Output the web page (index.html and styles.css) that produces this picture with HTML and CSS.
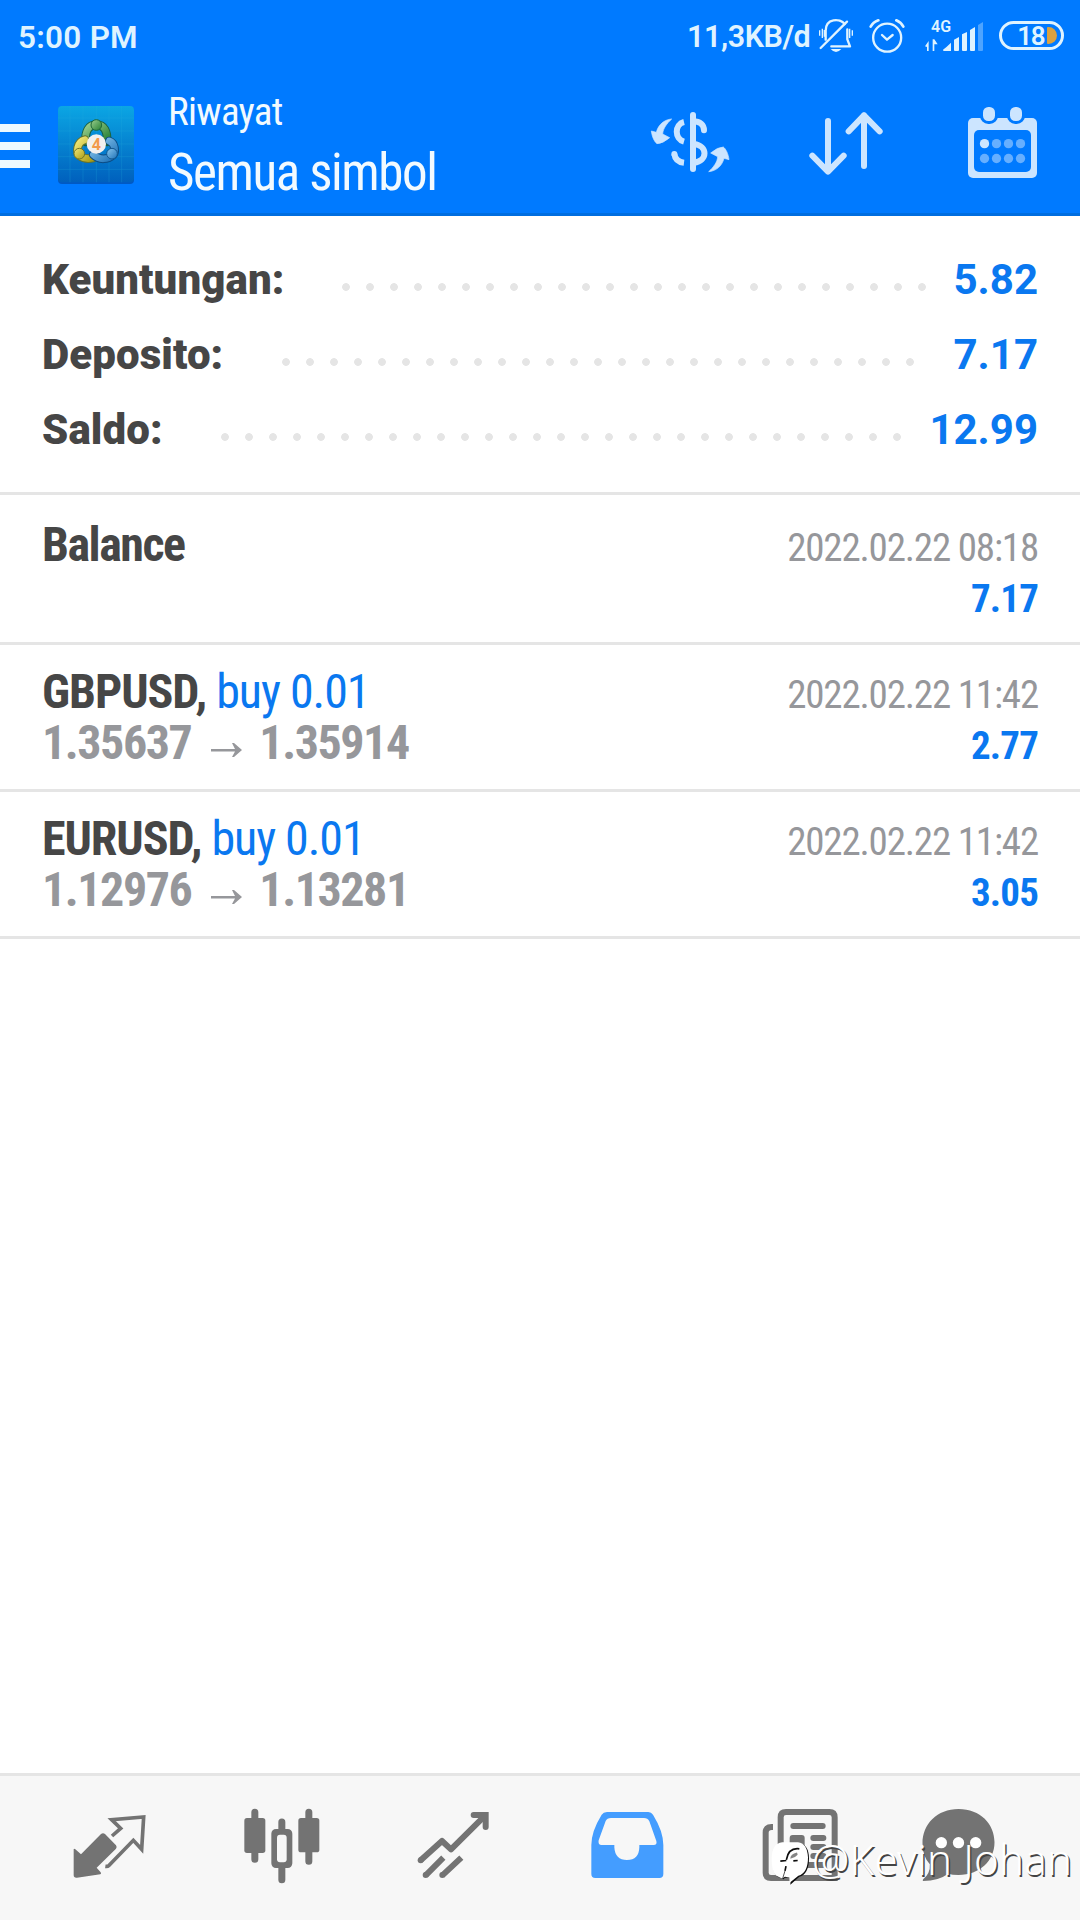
FILE: index.html
```html
<!DOCTYPE html>
<html lang="id">
<head>
<meta charset="utf-8">
<title>Riwayat</title>
<link rel="stylesheet" href="styles.css">
</head>
<body>
<div class="screen">
  <div class="status">
    <span class="clock">5:00 PM</span>
    <span class="speed">11,3KB/d</span>
    <svg class="bell" viewBox="594 54 108 108">
      <g fill="none" stroke="#dff3ff" stroke-width="7" stroke-linecap="round" stroke-linejoin="round">
        <path d="M602 144L681 65"/><path d="M617 119V92C617 54 660 54 674 72"/><path d="M682 88V118L690 139H634"/>
      </g>
      <g stroke="#dff3ff" stroke-width="4"><path d="M599 91V107M607 86V114M613 90V110M689 86V114M697 91V107"/></g>
      <path d="M632 147H664Q648 165 632 147Z" fill="#dff3ff"/>
    </svg>
    <svg class="alarm" viewBox="746 54 108 108">
      <g fill="none" stroke="#dff3ff" stroke-width="7" stroke-linecap="round" stroke-linejoin="round">
        <circle cx="800.500" cy="113" r="42"/><path d="M785 105L800 119L817 105"/><path d="M751 80Q758 67 774 61M849 80Q842 67 828 61" stroke-width="8"/>
      </g>
    </svg>
    <div class="signal">
      <span class="net">4G</span>
      <svg class="bars" viewBox="915 60 177 96" fill="#dff3ff">
        <path d="M915 136L926 120V150H921V138Z M938 150V115H943L953 130H943V150Z"/>
        <path d="M969 146Q981 137 993 125V150H972Q969 150 969 146Z"/>
        <path d="M1002 116L1017 108V147Q1017 150 1014 150H1005Q1002 150 1002 147Z"/>
        <path d="M1026 100L1041 93V147Q1041 150 1038 150H1029Q1026 150 1026 147Z"/>
        <path d="M1050 87L1065 78V147Q1065 150 1062 150H1053Q1050 150 1050 147Z"/>
        <path d="M1074 72L1089 63V147Q1089 150 1086 150H1077Q1074 150 1074 147Z" opacity=".35"/>
      </svg>
    </div>
    <div class="battery"><span>18</span><i></i></div>
  </div>

  <header class="appbar">
    <div class="menu"><i></i><i></i><i></i></div>
    <svg class="logo" viewBox="172 315 234 240">
      <defs>
        <linearGradient id="tile" x1="0" y1="0" x2="0" y2="1"><stop offset="0" stop-color="#0ba6e4"/><stop offset="1" stop-color="#0060bd"/></linearGradient>
        <linearGradient id="green" x1="0" y1="0" x2="1" y2="1"><stop offset="0" stop-color="#9ccf8f"/><stop offset="1" stop-color="#257f32"/></linearGradient>
        <linearGradient id="gold" x1="0" y1="0" x2="1" y2="1"><stop offset="0" stop-color="#f0e777"/><stop offset="1" stop-color="#ac9d16"/></linearGradient>
        <linearGradient id="sky" x1="0" y1="0" x2="1" y2="1"><stop offset="0" stop-color="#8cc8ee"/><stop offset="1" stop-color="#1e72b8"/></linearGradient>
      </defs>
      <rect x="175" y="321" width="228" height="231" rx="12" fill="#0059c4"/>
      <rect x="175" y="318" width="228" height="229" rx="12" fill="url(#tile)"/>
      <path d="M211 318V547M250 318V547M290 318V547M328 318V547M366 318V547M175 354H403M175 393H403M175 432H403M175 470H403M175 508H403" stroke="#27b2df" stroke-width="2" opacity=".33"/>
      <g fill="none" stroke-linecap="round">
        <path d="M258 426C256 395 266 374 290 374S324 395 322 426" stroke="#1b6040" stroke-width="26"/>
        <path d="M258 423C256 395 266 374 290 374S324 395 322 423" stroke="url(#green)" stroke-width="20"/>
        <path d="M256 419C231 425 228 460 240 468S264 478 280 474" stroke="#67742d" stroke-width="26"/>
        <path d="M256 419C231 425 228 460 240 468S264 478 280 474" stroke="url(#gold)" stroke-width="20"/>
        <path d="M329 423C346 429 350 456 338 467S299 482 281 464" stroke="#0b4b84" stroke-width="26"/>
        <path d="M329 423C346 429 350 456 338 467S299 482 281 464" stroke="url(#sky)" stroke-width="20"/>
      </g>
      <circle cx="290" cy="375" r="16" fill="url(#green)" stroke="#1e693b" stroke-width="3"/>
      <circle cx="239" cy="461" r="16" fill="url(#gold)" stroke="#6e7428" stroke-width="3"/>
      <circle cx="337" cy="461" r="16" fill="url(#sky)" stroke="#12578f" stroke-width="3"/>
      <circle cx="290" cy="432" r="29" fill="#f2f0ef"/>
      <text x="290" y="449" text-anchor="middle" class="four">4</text>
    </svg>
    <div class="titles">
      <span class="subtitle">Riwayat</span>
      <span class="title">Semua simbol</span>
    </div>
    <svg class="swap" viewBox="90 315 240 231">
      <g fill="none" stroke="#cce5ff" stroke-width="18">
        <path d="M219 345V507" stroke-linecap="round"/>
        <path d="M192 366C163 373 163 417 192 425"/>
        <path d="M219 364C241 364 252 374 252 391" stroke-linecap="round"/>
        <path d="M163 462C165 477 175 486 192 488"/><path d="M163 462V462.100" stroke-linecap="round"/>
        <path d="M222 432C264 437 264 483 222 488"/>
      </g>
      <g fill="#cce5ff" stroke="#cce5ff" stroke-width="2" stroke-linejoin="round">
        <path d="M155 357C132 359 115 374 109 397L94 393C96 410 103 425 111 431Q128 431 149 413L128 402C129 385 141 370 155 357Z"/>
        <path d="M155 357C132 359 115 374 109 397L94 393C96 410 103 425 111 431Q128 431 149 413L128 402C129 385 141 370 155 357Z" transform="rotate(180 210.500 436)"/>
      </g>
    </svg>
    <svg class="sort" viewBox="564 315 228 231">
      <path d="M624 363V514M577 467L624 515L671 467M732 498V346M686 394L732 346L779 394" fill="none" stroke="#cce5ff" stroke-width="18" stroke-linecap="round" stroke-linejoin="round"/>
    </svg>
    <svg class="calendar" viewBox="1041 315 213 231">
      <rect x="1044" y="354" width="207" height="180" rx="15" fill="#cce5ff"/>
      <g stroke="#007aff" paint-order="stroke" fill="#cce5ff"><rect x="1089" y="321" width="36" height="42" rx="16" stroke-width="18"/><rect x="1170" y="321" width="36" height="42" rx="16" stroke-width="18"/></g>
      <rect x="1062" y="390" width="171" height="126" rx="15" fill="#007aff"/>
      <circle cx="1093.500" cy="431" r="14" fill="#cce5ff"/>
      <g fill="#66afff"><circle cx="1129.500" cy="431" r="14"/><circle cx="1165.500" cy="431" r="14"/><circle cx="1201.500" cy="431" r="14"/><circle cx="1093.500" cy="475.500" r="14"/><circle cx="1129.500" cy="475.500" r="14"/><circle cx="1165.500" cy="475.500" r="14"/><circle cx="1201.500" cy="475.500" r="14"/></g>
    </svg>
  </header>

  <section class="summary">
    <div class="sum profit"><b>Keuntungan:</b><i class="leader"></i><em>5.82</em></div>
    <div class="sum deposit"><b>Deposito:</b><i class="leader"></i><em>7.17</em></div>
    <div class="sum balance"><b>Saldo:</b><i class="leader"></i><em>12.99</em></div>
  </section>

  <section class="deals">
    <div class="deal first">
      <div class="left"><div class="name"><b>Balance</b></div></div>
      <div class="right"><div class="date">2022.02.22 08:18</div><div class="gain">7.17</div></div>
    </div>
    <div class="deal">
      <div class="left"><div class="name"><b>GBPUSD,</b> <span class="side">buy 0.01</span></div>
        <div class="prices"><span>1.35637</span><svg class="arrow" viewBox="0 0 31 14"><path d="M0 6H24L21 0H23L31 7L23 14H21L24 8.500H0Z"/></svg><span>1.35914</span></div></div>
      <div class="right"><div class="date">2022.02.22 11:42</div><div class="gain">2.77</div></div>
    </div>
    <div class="deal">
      <div class="left"><div class="name"><b>EURUSD,</b> <span class="side">buy 0.01</span></div>
        <div class="prices"><span>1.12976</span><svg class="arrow" viewBox="0 0 31 14"><path d="M0 6H24L21 0H23L31 7L23 14H21L24 8.500H0Z"/></svg><span>1.13281</span></div></div>
      <div class="right"><div class="date">2022.02.22 11:42</div><div class="gain">3.05</div></div>
    </div>
  </section>

  <nav class="tabs">
    <svg viewBox="85 138 252 252">
      <path d="M102 268Q103 265 107 268L124 283L184 222Q190 217 196 222L229 256Q233 261 229 266L171 323L183 337Q186 342 182 343L112 353Q102 354 102 345Z" fill="#737373"/>
      <path d="M217 228L243 205L216 179L312 171L306 268L281 241L207 317Q204 320 197 319" fill="none" stroke="#737373" stroke-width="11"/>
    </svg>
    <svg viewBox="602 138 252 252">
      <path d="M643.500 157V298M805.500 157V304M724.500 186V215M724.500 320V359" stroke="#737373" stroke-width="21" stroke-linecap="round"/>
      <rect x="612" y="174" width="63" height="105" rx="8" fill="#737373"/><rect x="774" y="174" width="63" height="103" rx="8" fill="#737373"/>
      <rect x="702" y="216" width="45" height="99" rx="5" fill="#737373" stroke="#737373" stroke-width="18"/><rect x="710" y="224" width="29" height="83" rx="9" fill="#f7f7f7"/>
    </svg>
    <svg viewBox="1120 138 252 252">
      <g fill="none" stroke="#737373" stroke-width="18"><path d="M1143 301L1207 243L1234 268L1336 167" stroke-linejoin="round"/><path d="M1302 165H1338V201" stroke-linecap="round"/><path d="M1158 346L1211 293M1208 346L1265 293"/></g>
      <g fill="#737373"><circle cx="1143" cy="301" r="9"/><circle cx="1158" cy="345" r="9"/><circle cx="1208" cy="345" r="9"/></g>
    </svg>
    <svg viewBox="77 138 252 252">
      <path fill-rule="evenodd" fill="#449dff" d="M140 156H264Q273 156 278 164Q309 214 309 255V342Q309 354 297 354H105Q93 354 93 342V255Q93 214 124 164Q129 156 140 156ZM152 174Q140 174 136 183L115 241Q112 255 124 255H162V262Q164 300 200 300T237 262V255H280Q291 255 288 243L267 184Q262 174 251 174Z"/>
    </svg>
    <svg viewBox="595 138 252 252">
      <path d="M640 201H636Q618 201 618 218V338Q618 354 634 354H825V172Q825 156 809 156H679Q663 156 663 172V354" fill="none" stroke="#737373" stroke-width="18"/>
      <path d="M701 198H789M761 234H791M761 261H791M761 288H791M701 315H791" stroke="#737373" stroke-width="18" stroke-linecap="round"/><rect x="690" y="225" width="45" height="72" rx="9" fill="#737373"/>
    </svg>
    <svg viewBox="1066.500 138 252 252">
      <path d="M1194 147C1260 147 1302 192 1302 247S1258 345 1194 345Q1175 345 1163 341Q1135 362 1088 363Q1085 361 1088 358Q1110 340 1108 313Q1086 290 1086 250C1086 192 1130 147 1194 147Z" fill="#737373"/>
      <g fill="#fff"><circle cx="1142.500" cy="248" r="17"/><circle cx="1194" cy="248" r="17"/><circle cx="1245.500" cy="248" r="17"/></g>
    </svg>
  </nav>

  <div class="watermark">
    <svg viewBox="15 30 120 140">
      <path id="blob" d="M55 40H102Q131 42 132 84Q132 131 103 140L76 164L77 147L86 141L60 143L55 147L36 139Q23 128 23 90Q23 42 55 40Z" fill="#0c0c0c"/>
      <path d="M52 36H99Q127 39 129 82Q129 128 100 137L74 158L73 142L60 140L51 145L34 137Q20 126 20 87Q20 39 52 36Z" fill="#fff"/>
      <path d="M76 86Q76 71 96 67L98 74Q90 84 76 86Z" fill="#858585"/>
      <path d="M103 56C80 53 68 66 64 89M46 93L64 91M85 92L98 91M63 108L60 122" fill="none" stroke="#0c0c0c" stroke-width="5"/>
      <path d="M60 122L53 145" fill="none" stroke="#555" stroke-width="3"/>
    </svg>
    <span>@Kevin Johan</span>
  </div>
</div>
</body>
</html>
```
FILE: styles.css
```css
* { box-sizing: border-box; }
body { margin: 0; background: #fff; font-family: Roboto, "Liberation Sans", sans-serif; }
i, em { font-style: normal; }
svg { display: block; flex: none; }
.screen { position: relative; width: 1080px; height: 1920px; display: flex; flex-direction: column; overflow: hidden; background: #fff; white-space: nowrap; }

.status { height: 72px; background: #007aff; color: #dff3ff; display: flex; align-items: center; padding-left: 18px; font-weight: 600; }
.clock { font-size: 31.500px; width: 669px; padding-top: 2px; letter-spacing: .25px; }
.speed { font-size: 30.500px; width: 131px; padding-top: 1px; letter-spacing: -.45px; }
.bell { width: 36px; height: 36px; }
.alarm { width: 36px; height: 36px; margin-left: 15px; }
.signal { width: 59px; height: 34px; margin-left: 20px; display: grid; }
.signal > * { grid-area: 1 / 1; }
.net { font-size: 16px; line-height: 16px; padding-left: 6px; }
.bars { width: 59px; height: 32px; margin-top: 2px; }
.battery { width: 65px; height: 29px; margin: 0 0 1px 15px; border: 3px solid #dff3ff; border-radius: 15px; display: flex; align-items: center; justify-content: flex-end; padding-right: 4px; gap: 3px; }
.battery span { font-size: 26px; line-height: 26px; letter-spacing: -1.500px; }
.battery i { width: 10px; height: 17px; border-radius: 1px 9px 9px 1px; background: #d9a13f; }

.appbar { height: 144px; background: #007aff; border-bottom: 3px solid #006ee0; display: flex; align-items: flex-start; color: #f2faff; }
.menu { width: 30px; height: 44px; margin-top: 52px; display: grid; gap: 10px; }
.menu i { background: #eef9ff; }
.logo { width: 78px; height: 80px; margin: 33px 0 0 27px; }
.four { font: bold 46px "Open Sans", sans-serif; fill: #f29a4c; }
.titles { width: 482px; margin: 17px 0 0 33px; display: flex; flex-direction: column; font-stretch: 75%; }
.subtitle { font-size: 39px; line-height: 46px; letter-spacing: -.700px; }
.title { font-size: 51px; line-height: 60px; margin-top: 8px; letter-spacing: -1.400px; }
.swap, .sort, .calendar { height: 77px; margin-top: 33px; }
.swap { width: 80px; }
.sort { width: 76px; margin-left: 78px; }
.calendar { width: 71px; margin-left: 83px; }

.summary { height: 279px; padding: 26px 42px 0; border-bottom: 3px solid #e5e5e5; }
.sum { height: 75px; display: flex; align-items: center; font-size: 42px; font-weight: 700; }
.sum b { color: #464646; width: 292px; letter-spacing: .1px; }
.deposit b { width: 232px; }
.balance b { width: 171px; }
.leader { width: 600px; height: 8px; margin-top: 14px; background: radial-gradient(circle, #e5e5e5 3.500px, transparent 4.200px) 0 0 / 24px 8px; }
.deposit .leader { width: 648px; }
.balance .leader { width: 696px; }
.sum em { flex: 1; text-align: right; color: #0a78f0; }

.deal { height: 147px; padding: 21px 42px 0; border-bottom: 3px solid #e5e5e5; display: flex; justify-content: space-between; font-stretch: 75%; }
.deal.first { height: 150px; padding-top: 24px; }
.name, .prices { font-size: 48px; line-height: 51px; letter-spacing: -1.050px; }
.name b { color: #464646; }
.first .name { letter-spacing: -1.500px; }
.side { color: #0a78f0; }
.prices { color: #96979b; font-weight: 700; display: flex; letter-spacing: -1.450px; }
.arrow { width: 31px; height: 14px; fill: #96979b; margin: 26px 17px 0 20px; }
.right { text-align: right; font-size: 39px; line-height: 51px; padding-top: 4px; }
.date { color: #96979b; letter-spacing: -1.180px; }
.gain { color: #0a78f0; font-weight: 700; letter-spacing: -.850px; }

.tabs { margin-top: auto; height: 147px; border-top: 3px solid #e5e5e5; background: #f7f7f7; padding-left: 24px; display: grid; grid-template-columns: repeat(5, 172.500px) 142px; align-items: center; justify-items: center; }
.tabs svg { width: 84px; height: 84px; }

.watermark { position: absolute; left: 770px; top: 1834px; display: flex; }
.watermark svg { width: 40px; height: 47px; margin-top: 6px; }
.watermark span { font: 300 42px/50px "Noto Sans", sans-serif; color: #fff; margin-left: 2px; letter-spacing: .2px; text-shadow: 1.500px 1.500px 0 #444; }
```
